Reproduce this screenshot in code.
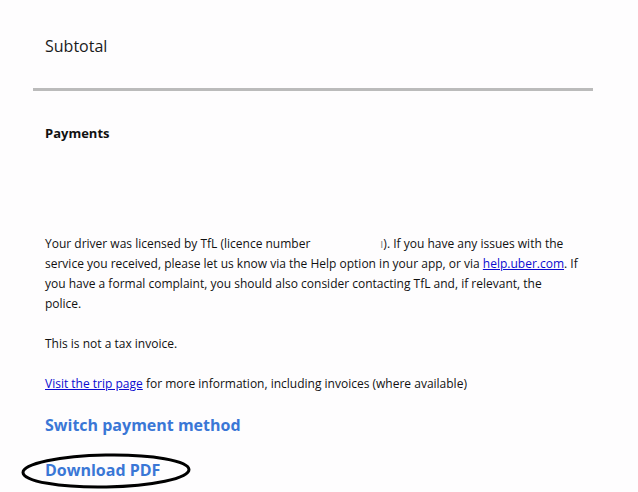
import React from "react";

export default function App() {
  return (
    <div
      className="w-[638px] h-[492px] overflow-hidden bg-[#fefdfe] text-[#111]"
      style={{ fontFamily: '"Open Sans", "Noto Sans", sans-serif' }}
    >
      <div className="pl-[33px] w-[593px]">
        <div className="pt-[34px] pl-[12px] text-[16px] leading-[24px] text-[#1a1a1a]">Subtotal</div>
        <div className="mt-[30px] h-[3px] bg-[#bbbbbb]" />
        <div className="pl-[12px]">
          <div className="mt-[32px] text-[13px] leading-[20px] font-bold">Payments</div>
          <p className="mt-[91px] text-[12px] leading-[20px] whitespace-nowrap">
            Your driver was licensed by TfL (licence number
            <span className="inline-block w-[70px]" />
            <span className="text-[#888]">ı</span>). If you have any issues with the
            <br />
            service you received, please let us know via the Help option in your app, or via{" "}
            <a className="text-[#0b0bd0] underline">help.uber.com</a>. If
            <br />
            you have a formal complaint, you should also consider contacting TfL and, if relevant, the
            <br />
            police.
          </p>
          <p className="mt-[20px] text-[12px] leading-[20px]">This is not a tax invoice.</p>
          <p className="mt-[20px] text-[12px] leading-[20px]">
            <a className="text-[#0b0bd0] underline">Visit the trip page</a> for more information, including invoices (where available)
          </p>
          <div className="mt-[19px] text-[16px] leading-[24px] font-bold text-[#3a77d6]">Switch payment method</div>
          <div className="relative mt-[21px] text-[16px] leading-[24px] font-bold text-[#3a77d6]">
            <span>Download PDF</span>
            <svg className="absolute left-[-24px] top-[-6px]" width="172" height="38" viewBox="0 0 172 38">
              <ellipse cx="85" cy="19" rx="83" ry="16" fill="none" stroke="#000" strokeWidth="3" transform="rotate(-1 85 19)" />
            </svg>
          </div>
        </div>
      </div>
    </div>
  );
}
